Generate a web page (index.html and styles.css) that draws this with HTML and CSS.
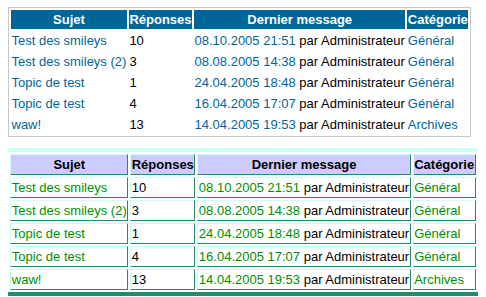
FILE: index.html
```html
<!DOCTYPE html>
<html lang="fr">
<head>
<meta charset="utf-8">
<title>Sujets</title>
<link rel="stylesheet" href="styles.css">
</head>
<body>
<table class="t1">
  <tr><th>Sujet</th><th>Réponses</th><th>Dernier message</th><th>Catégorie</th></tr>
  <tr><td><a href="#">Test des smileys</a></td><td>10</td><td><a href="#">08.10.2005 21:51</a> par Administrateur</td><td><a href="#">Général</a></td></tr>
  <tr><td><a href="#">Test des smileys (2)</a></td><td>3</td><td><a href="#">08.08.2005 14:38</a> par Administrateur</td><td><a href="#">Général</a></td></tr>
  <tr><td><a href="#">Topic de test</a></td><td>1</td><td><a href="#">24.04.2005 18:48</a> par Administrateur</td><td><a href="#">Général</a></td></tr>
  <tr><td><a href="#">Topic de test</a></td><td>4</td><td><a href="#">16.04.2005 17:07</a> par Administrateur</td><td><a href="#">Général</a></td></tr>
  <tr><td><a href="#">waw!</a></td><td>13</td><td><a href="#">14.04.2005 19:53</a> par Administrateur</td><td><a href="#">Archives</a></td></tr>
</table>
<div class="wrap2">
<table class="t2">
  <tr><th>Sujet</th><th>Réponses</th><th>Dernier message</th><th>Catégorie</th></tr>
  <tr><td><a href="#">Test des smileys</a></td><td>10</td><td><a href="#">08.10.2005 21:51</a> par Administrateur</td><td><a href="#">Général</a></td></tr>
  <tr><td><a href="#">Test des smileys (2)</a></td><td>3</td><td><a href="#">08.08.2005 14:38</a> par Administrateur</td><td><a href="#">Général</a></td></tr>
  <tr><td><a href="#">Topic de test</a></td><td>1</td><td><a href="#">24.04.2005 18:48</a> par Administrateur</td><td><a href="#">Général</a></td></tr>
  <tr><td><a href="#">Topic de test</a></td><td>4</td><td><a href="#">16.04.2005 17:07</a> par Administrateur</td><td><a href="#">Général</a></td></tr>
  <tr><td><a href="#">waw!</a></td><td>13</td><td><a href="#">14.04.2005 19:53</a> par Administrateur</td><td><a href="#">Archives</a></td></tr>
</table>
</div>
</body>
</html>
```
FILE: styles.css
```css
html, body {
  background: #ffffff;
}
body {
  margin: 7px 8px;
  font-family: "Liberation Sans", Arial, sans-serif;
  font-size: 13px;
  line-height: 15px;
  color: #000000;
}
table {
  border-collapse: separate;
  border-spacing: 2px;
}
th, td {
  padding: 2px 0.5px;
  white-space: nowrap;
  text-align: left;
  vertical-align: middle;
}
th {
  text-align: center;
  font-weight: bold;
}
a {
  text-decoration: none;
}
.t1 {
  border: 1px solid #c8c8c8;
}
.t1 th {
  background: #006699;
  color: #ffffff;
}
.t1 a {
  color: #006699;
}
.wrap2 {
  display: flex;
  justify-content: center;
  margin-top: 11px;
}
.t2 {
  border: 4px solid;
  border-color: #ccffee #268a6a #268a6a #ccffee;
}
.t2 th, .t2 td {
  border: 1px solid;
  border-color: #ccffee #268a6a #268a6a #ccffee;
}
.t2 th {
  background: #ccccff;
  color: #000000;
}
.t2 a {
  color: #008f00;
}
```
